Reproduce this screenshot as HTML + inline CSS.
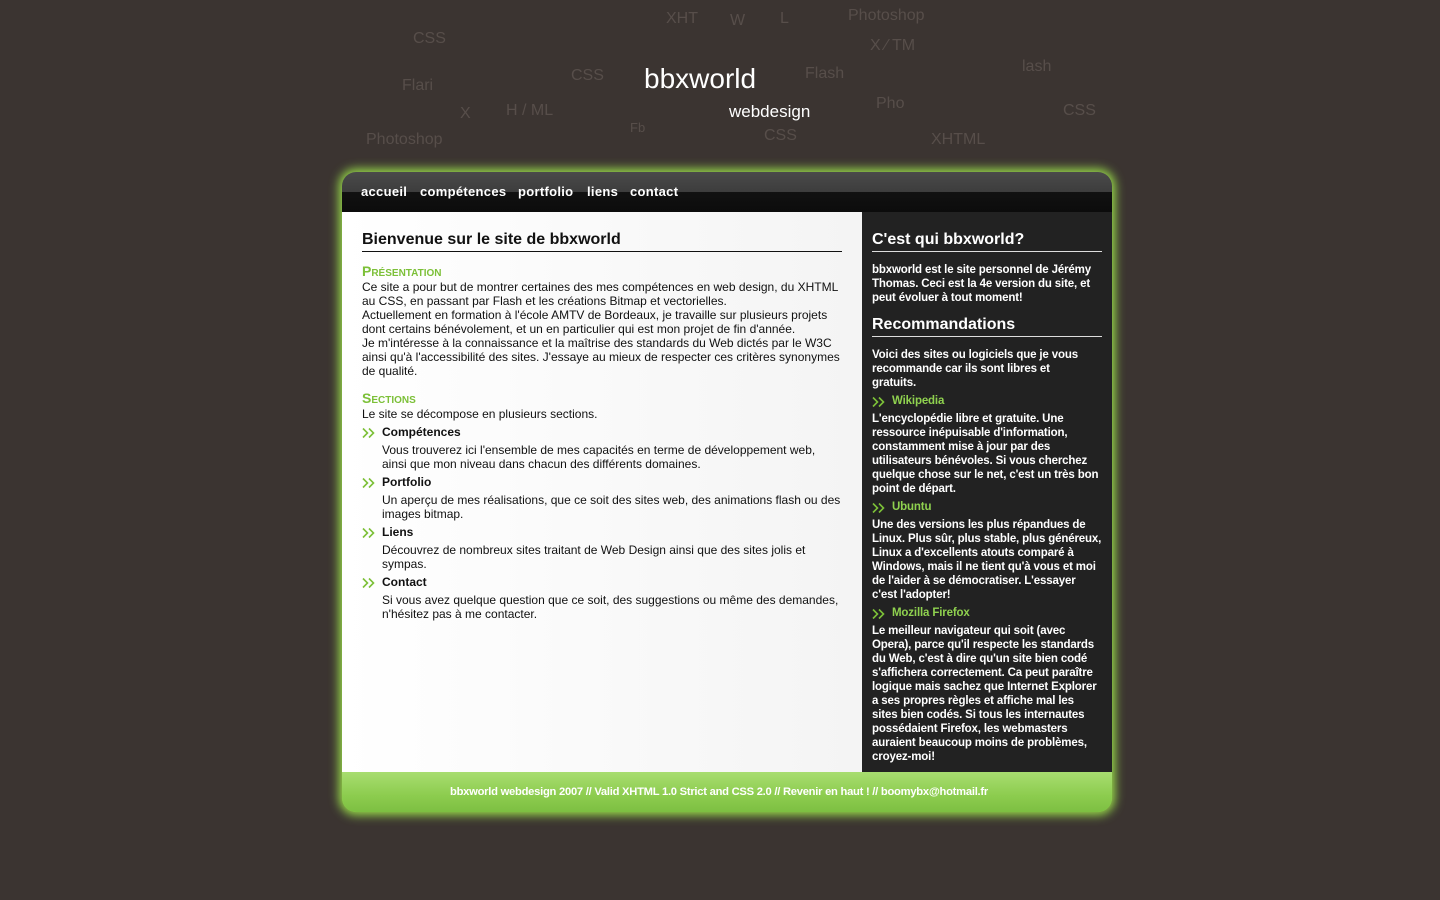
<!DOCTYPE html>
<html><head><meta charset="utf-8"><style>
body{margin:0;width:1440px;height:900px;background:#3b3431;position:relative;overflow:hidden;font-family:"Liberation Sans",Arial,sans-serif}
.w{position:absolute;color:#574e4a;font-size:16px;white-space:nowrap}
.box{position:absolute;left:342px;top:172px;width:770px;height:640px;border-radius:14px;box-shadow:0 0 10px 3px #9be04a;background:#8fcf4d;overflow:hidden}
.nav{position:absolute;left:0;top:0;width:770px;height:40px;background:linear-gradient(#4a4a4a 0,#3d3d3d 50%,#111 50%,#0c0c0c)}
.nav span{position:absolute;top:12px;color:#fff;font-size:13px;font-weight:bold;letter-spacing:0.3px}
.main{position:absolute;left:0;top:40px;width:520px;height:560px;background:linear-gradient(90deg,#fff,#f4f4f4)}
.side{position:absolute;left:520px;top:40px;width:250px;height:560px;background:#222}
.foot{position:absolute;left:0;top:600px;width:770px;height:40px;background:linear-gradient(#a8dd70,#8ccc4e 60%,#7dbf42)}
.t{position:absolute;font-size:12px;line-height:14px;color:#111;white-space:nowrap}
.s{position:absolute;font-size:11.5px;line-height:14px;color:#fff;white-space:nowrap;font-weight:bold;letter-spacing:-0.15px}
.h{position:absolute;font-size:16px;font-weight:bold;border-bottom:1px solid #111;height:20px}
.g{color:#7cc038;font-weight:bold;font-variant:small-caps;font-size:14px}
.ar{position:absolute;width:14px;height:12px}
</style></head><body>
<svg width="0" height="0" style="position:absolute"><defs><symbol id="a" viewBox="0 0 14 12"><path d="M1 1.5 L5.5 6 L1 10.5 M7 1.5 L11.5 6 L7 10.5" fill="none" stroke="#7cc038" stroke-width="1.6"/></symbol></defs></svg>
<div class="w" style="left:413px;top:30px">CSS</div>
<div class="w" style="left:666px;top:10px">XHT</div>
<div class="w" style="left:730px;top:12px">W</div>
<div class="w" style="left:780px;top:10px">L</div>
<div class="w" style="left:848px;top:7px">Photoshop</div>
<div class="w" style="left:870px;top:37px">X ⁄ TM</div>
<div class="w" style="left:1022px;top:58px">lash</div>
<div class="w" style="left:402px;top:77px">Flari</div>
<div class="w" style="left:571px;top:67px">CSS</div>
<div class="w" style="left:805px;top:65px">Flash</div>
<div class="w" style="left:460px;top:105px">X</div>
<div class="w" style="left:506px;top:102px">H / ML</div>
<div class="w" style="left:876px;top:95px">Pho</div>
<div class="w" style="left:1063px;top:102px">CSS</div>
<div class="w" style="left:366px;top:131px">Photoshop</div>
<div class="w" style="left:630px;top:120px;font-size:13px">Fb</div>
<div class="w" style="left:764px;top:127px">CSS</div>
<div class="w" style="left:931px;top:131px">XHTML</div>
<div style="position:absolute;left:644px;top:63px;color:#fff;font-size:28px">bbxworld</div>
<div style="position:absolute;left:729px;top:102px;color:#fff;font-size:17px">webdesign</div>
<div class="box">
<div class="nav"><span style="left:19px">accueil</span><span style="left:78px">compétences</span><span style="left:176px">portfolio</span><span style="left:245px">liens</span><span style="left:288px">contact</span></div>
<div class="main"></div><div class="side"></div>
<div class="foot"><div style="position:absolute;left:108px;top:14px;color:#fff;font-size:11.2px;font-weight:bold;letter-spacing:-0.25px">bbxworld webdesign 2007 // Valid XHTML 1.0 Strict and CSS 2.0 // Revenir en haut ! // boomybx@hotmail.fr</div></div>
</div>
<div class="h" style="left:362px;top:231px;width:480px;color:#111">Bienvenue sur le site de bbxworld</div>
<div class="t g" style="left:362px;top:264px">Présentation</div>
<div class="t" style="left:362px;top:280px">Ce site a pour but de montrer certaines des mes compétences en web design, du XHTML<br>au CSS, en passant par Flash et les créations Bitmap et vectorielles.<br>Actuellement en formation à l'école AMTV de Bordeaux, je travaille sur plusieurs projets<br>dont certains bénévolement, et un en particulier qui est mon projet de fin d'année.<br>Je m'intéresse à la connaissance et la maîtrise des standards du Web dictés par le W3C<br>ainsi qu'à l'accessibilité des sites. J'essaye au mieux de respecter ces critères synonymes<br>de qualité.</div>
<div class="t g" style="left:362px;top:391px">Sections</div>
<div class="t" style="left:362px;top:407px">Le site se décompose en plusieurs sections.</div>
<svg class="ar" style="left:362px;top:427px"><use href="#a"/></svg><div class="t" style="left:382px;top:425px;font-weight:bold">Compétences</div>
<div class="t" style="left:382px;top:443px">Vous trouverez ici l'ensemble de mes capacités en terme de développement web,<br>ainsi que mon niveau dans chacun des différents domaines.</div>
<svg class="ar" style="left:362px;top:477px"><use href="#a"/></svg><div class="t" style="left:382px;top:475px;font-weight:bold">Portfolio</div>
<div class="t" style="left:382px;top:493px">Un aperçu de mes réalisations, que ce soit des sites web, des animations flash ou des<br>images bitmap.</div>
<svg class="ar" style="left:362px;top:527px"><use href="#a"/></svg><div class="t" style="left:382px;top:525px;font-weight:bold">Liens</div>
<div class="t" style="left:382px;top:543px">Découvrez de nombreux sites traitant de Web Design ainsi que des sites jolis et<br>sympas.</div>
<svg class="ar" style="left:362px;top:577px"><use href="#a"/></svg><div class="t" style="left:382px;top:575px;font-weight:bold">Contact</div>
<div class="t" style="left:382px;top:593px">Si vous avez quelque question que ce soit, des suggestions ou même des demandes,<br>n'hésitez pas à me contacter.</div>
<div class="h" style="left:872px;top:231px;width:230px;color:#fff;border-color:#ddd">C'est qui bbxworld?</div>
<div class="s" style="left:872px;top:263px">bbxworld est le site personnel de Jérémy<br>Thomas. Ceci est la 4e version du site, et<br>peut évoluer à tout moment!</div>
<div class="h" style="left:872px;top:316px;width:230px;color:#fff;border-color:#ddd">Recommandations</div>
<div class="s" style="left:872px;top:348px">Voici des sites ou logiciels que je vous<br>recommande car ils sont libres et<br>gratuits.</div>
<svg class="ar" style="left:872px;top:396px"><use href="#a"/></svg><div class="s" style="left:892px;top:394px;color:#8fd14f">Wikipedia</div>
<div class="s" style="left:872px;top:412px">L'encyclopédie libre et gratuite. Une<br>ressource inépuisable d'information,<br>constamment mise à jour par des<br>utilisateurs bénévoles. Si vous cherchez<br>quelque chose sur le net, c'est un très bon<br>point de départ.</div>
<svg class="ar" style="left:872px;top:502px"><use href="#a"/></svg><div class="s" style="left:892px;top:500px;color:#8fd14f">Ubuntu</div>
<div class="s" style="left:872px;top:518px">Une des versions les plus répandues de<br>Linux. Plus sûr, plus stable, plus généreux,<br>Linux a d'excellents atouts comparé à<br>Windows, mais il ne tient qu'à vous et moi<br>de l'aider à se démocratiser. L'essayer<br>c'est l'adopter!</div>
<svg class="ar" style="left:872px;top:608px"><use href="#a"/></svg><div class="s" style="left:892px;top:606px;color:#8fd14f">Mozilla Firefox</div>
<div class="s" style="left:872px;top:624px">Le meilleur navigateur qui soit (avec<br>Opera), parce qu'il respecte les standards<br>du Web, c'est à dire qu'un site bien codé<br>s'affichera correctement. Ca peut paraître<br>logique mais sachez que Internet Explorer<br>a ses propres règles et affiche mal les<br>sites bien codés. Si tous les internautes<br>possédaient Firefox, les webmasters<br>auraient beaucoup moins de problèmes,<br>croyez-moi!</div>
</body></html>
